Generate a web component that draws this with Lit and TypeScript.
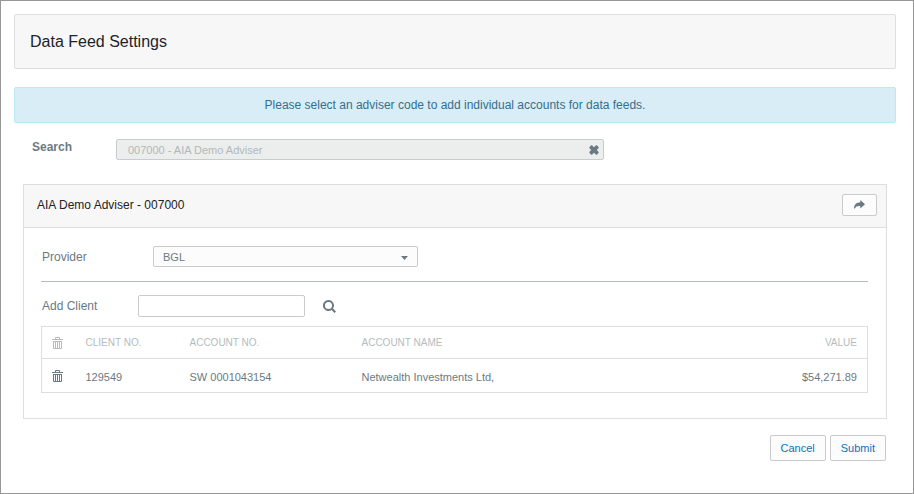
import { LitElement, html, css, svg } from "lit";
import { customElement, state } from "lit/decorators.js";

interface Account {
  client: string;
  account: string;
  name: string;
  value: string;
}

const trashIcon = html`<svg class="trash" viewBox="0 0 11 12" width="11" height="12" aria-hidden="true">
  ${svg`<path d="M0 2h3V1q0-1 1-1h3q1 0 1 1v1h3v1H0zM4 1v1h3V1z" fill-rule="evenodd"/>
  <path d="M1 4h9v7q0 1-1 1H2q-1 0-1-1zM2 5v6h1V5zM4 5v6h1V5zM6 5v6h1V5zM8 5v6h1V5z" fill-rule="evenodd"/>`}
</svg>`;

@customElement("app-root")
export class AppRoot extends LitElement {
  @state() private accounts: Account[] = [
    {
      client: "129549",
      account: "SW 0001043154",
      name: "Netwealth Investments Ltd,",
      value: "$54,271.89",
    },
  ];

  static styles = css`
    :host {
      display: block;
      font: 12px/16px "Liberation Sans", Arial, sans-serif;
      color: #6b7a82;
    }
    * {
      box-sizing: border-box;
    }
    button,
    input,
    select {
      font: inherit;
      color: inherit;
      margin: 0;
    }
    svg {
      display: block;
      fill: currentColor;
    }
    .page {
      min-height: 100vh;
      padding: 13px 17px 32px 13px;
      border: 1px solid #979797;
      background: #fff;
    }
    .title {
      margin: 0 0 18px;
      padding: 15px;
      border: 1px solid #dedede;
      border-radius: 2px;
      background: #f7f7f7;
      color: #1d232b;
      font-size: 16px;
      font-weight: 400;
      line-height: 23px;
    }
    .notice {
      margin: 0 0 16px;
      padding: 9px;
      border: 1px solid #bce8f1;
      border-radius: 2px;
      background: #d9edf7;
      color: #31708f;
      text-align: center;
    }
    .search {
      display: flex;
      align-items: flex-start;
      padding-left: 18px;
    }
    .search label {
      flex: none;
      width: 84px;
      font-weight: 700;
    }
    .field {
      display: flex;
      align-items: center;
      flex: 0 1 488px;
      height: 21px;
      border: 1px solid #c8cccf;
      border-radius: 2px;
      background: #eceeed;
    }
    .field input {
      flex: 1;
      min-width: 0;
      padding: 1px 11px 0;
      border: 0;
      background: none;
      color: #b0b8ba;
      font-size: 11px;
    }
    .plain {
      display: block;
      flex: none;
      padding: 0;
      border: 0;
      background: none;
    }
    .clear {
      margin-right: 4px;
    }
    .panel {
      margin: 24px 9px 16px;
      border: 1px solid #dedede;
    }
    .panel-head {
      display: flex;
      align-items: center;
      justify-content: space-between;
      padding: 9px 9px 11px 13px;
      border-bottom: 1px solid #dedede;
      background: #f7f7f7;
      color: #222;
    }
    .panel-head h2 {
      margin: 0;
      font-size: 12px;
      font-weight: 400;
      line-height: 18px;
    }
    .button {
      padding: 0;
      border: 1px solid #cbcbcb;
      border-radius: 2px;
      background: #fcfcfc;
    }
    .share {
      display: grid;
      place-items: center;
      width: 35px;
      height: 22px;
      padding-bottom: 2px;
      color: #6b7a82;
    }
    .panel-body {
      padding: 18px 18px 25px 17px;
    }
    .row {
      display: flex;
      align-items: center;
    }
    .row label {
      flex: none;
      padding-left: 1px;
    }
    .provider {
      padding-bottom: 14px;
      border-bottom: 1px solid #b5babc;
    }
    .provider label {
      width: 112px;
    }
    .select {
      display: grid;
      align-items: center;
      flex: 0 1 265px;
    }
    .select > * {
      grid-area: 1 / 1;
    }
    .select select {
      appearance: none;
      width: 100%;
      height: 21px;
      padding: 0 9px;
      border: 1px solid #c8cccf;
      border-radius: 2px;
      background: #fcfcfc;
      font-size: 11px;
    }
    .caret {
      justify-self: end;
      margin: 2px 10px 0 0;
      pointer-events: none;
    }
    .add {
      padding: 13px 0 9px;
    }
    .add label {
      width: 97px;
    }
    .add input {
      flex: 0 1 167px;
      min-width: 0;
      height: 22px;
      padding: 0 8px;
      border: 1px solid #c8cccf;
      border-radius: 2px;
      background: #fff;
    }
    .find {
      margin-left: 18px;
    }
    table {
      width: 100%;
      table-layout: fixed;
      border-collapse: collapse;
      border: 1px solid #dedede;
      font-size: 11px;
    }
    th,
    td {
      padding: 0;
      text-align: left;
      vertical-align: middle;
    }
    th {
      height: 32px;
      border-bottom: 1px solid #dedede;
      color: #b4bcbe;
      font-size: 10px;
      font-weight: 400;
      text-transform: uppercase;
    }
    td {
      height: 34px;
      padding-top: 2px;
    }
    .icon-col {
      width: 44px;
      padding: 0 0 0 10px;
    }
    .client-col {
      width: 104px;
    }
    .account-col {
      width: 172px;
    }
    .value-col {
      width: 140px;
      padding-right: 10px;
      text-align: right;
    }
    .actions {
      display: flex;
      justify-content: flex-end;
      gap: 4px;
      padding-right: 10px;
    }
    .actions .button {
      padding: 4px 10px;
      color: #0d72b5;
      font-size: 11px;
      line-height: 16px;
    }
  `;

  private remove(row: Account) {
    this.accounts = this.accounts.filter((a) => a !== row);
  }

  render() {
    return html`
      <main class="page">
        <h1 class="title">Data Feed Settings</h1>
        <p class="notice">Please select an adviser code to add individual accounts for data feeds.</p>

        <div class="search">
          <label for="search">Search</label>
          <div class="field">
            <input id="search" type="text" value="007000 - AIA Demo Adviser" readonly />
            <button class="plain clear" type="button" aria-label="Clear search">
              <svg viewBox="0 0 10 10" width="10" height="10" aria-hidden="true">
                <path
                  d="M2.200.3h.8L5 2.200 7 .3h.8L9.700 2.200V3L7.800 5l1.900 2v.8L7.800 9.700H7L5 7.800 3 9.700h-.8L.3 7.800V7l1.900-2L.3 3v-.8z"
                />
              </svg>
            </button>
          </div>
        </div>

        <section class="panel">
          <header class="panel-head">
            <h2>AIA Demo Adviser - 007000</h2>
            <button class="button share" type="button" aria-label="Share">
              <svg viewBox="0 0 11 9" width="11" height="9" aria-hidden="true">
                <path d="M6.300 0 11 4.200 6.300 8.400V6C3.500 5.800 1.600 6.300.8 8.600H0C0 4.800 2.300 2.300 6.300 2.200z" />
              </svg>
            </button>
          </header>

          <div class="panel-body">
            <div class="row provider">
              <label for="provider">Provider</label>
              <div class="select">
                <select id="provider">
                  <option>BGL</option>
                </select>
                <svg class="caret" viewBox="0 0 7 4" width="7" height="4" aria-hidden="true">
                  <path d="M0 0h7L3.500 4z" />
                </svg>
              </div>
            </div>

            <div class="row add">
              <label for="client">Add Client</label>
              <input id="client" type="text" />
              <button class="plain find" type="button" aria-label="Find client">
                <svg viewBox="0 0 13 13" width="13" height="13" aria-hidden="true">
                  <path
                    d="M5.500 0a5.500 5.500 0 1 0 3.100 10L11.500 13 13 11.500 10 8.600A5.500 5.500 0 0 0 5.500 0zm0 2a3.500 3.500 0 1 1 0 7 3.500 3.500 0 0 1 0-7z"
                    fill-rule="evenodd"
                  />
                </svg>
              </button>
            </div>

            <table>
              <thead>
                <tr>
                  <th class="icon-col" aria-label="Remove">${trashIcon}</th>
                  <th class="client-col">Client No.</th>
                  <th class="account-col">Account No.</th>
                  <th>Account Name</th>
                  <th class="value-col">Value</th>
                </tr>
              </thead>
              <tbody>
                ${this.accounts.map(
                  (row) => html`
                    <tr>
                      <td class="icon-col">
                        <button
                          class="plain"
                          type="button"
                          aria-label="Remove ${row.client}"
                          @click=${() => this.remove(row)}
                        >
                          ${trashIcon}
                        </button>
                      </td>
                      <td>${row.client}</td>
                      <td>${row.account}</td>
                      <td>${row.name}</td>
                      <td class="value-col">${row.value}</td>
                    </tr>
                  `,
                )}
              </tbody>
            </table>
          </div>
        </section>

        <div class="actions">
          <button class="button" type="button">Cancel</button>
          <button class="button" type="submit">Submit</button>
        </div>
      </main>
    `;
  }
}
